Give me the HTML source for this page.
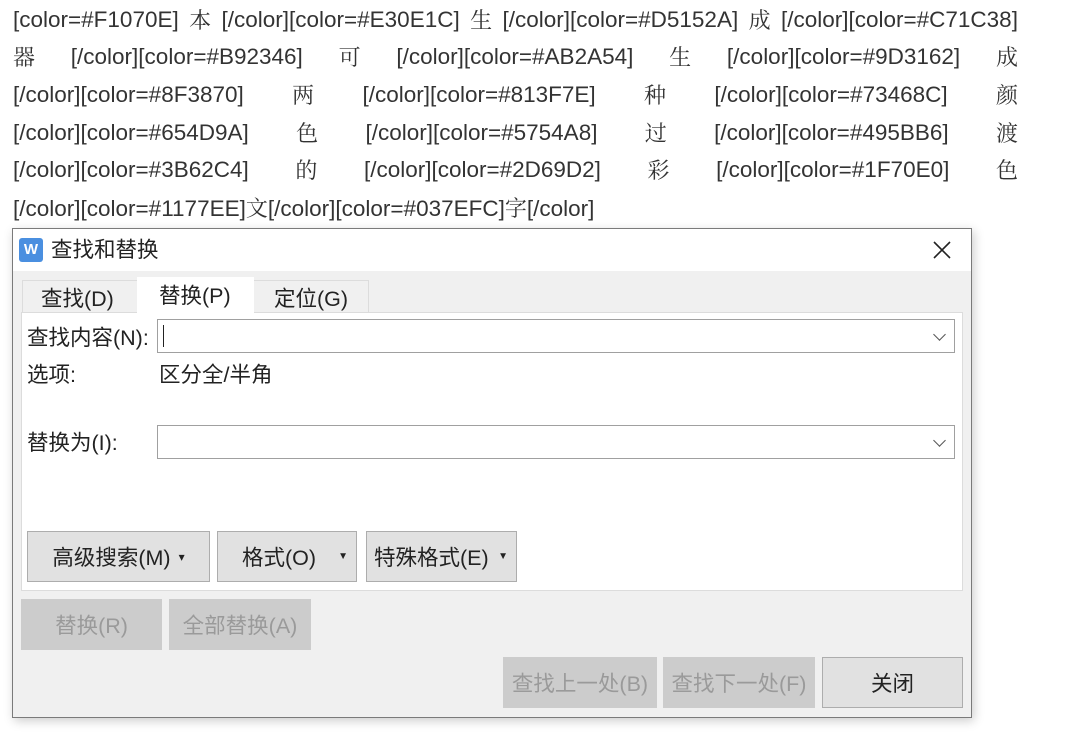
<!DOCTYPE html>
<html><head><meta charset="utf-8"><style>
body{margin:0;width:1080px;height:747px;background:#fff;position:relative;overflow:hidden;font-family:"Liberation Sans","Noto Sans CJK SC",sans-serif;color:#222}
.l{position:absolute;left:13px;width:1005px;font-size:22.5px;line-height:26px;display:flex;justify-content:space-between;white-space:pre;color:#333}
.l span.c{font-family:"Noto Serif CJK SC",serif;font-size:22px}
.a{position:absolute;box-sizing:border-box}
.t{font-size:21.5px;color:#222;position:absolute;line-height:26px}
.btn{position:absolute;box-sizing:border-box;background:#e1e1e1;border:1px solid #adadad;font-size:21.5px;display:flex;align-items:center;justify-content:center;color:#222}
.dis{background:#cccccc;border:1px solid #cccccc;color:#9a9a9a}
.inp{position:absolute;box-sizing:border-box;background:#fff;border:1px solid #a0a0a0}
.chev{position:absolute;right:10px;top:10px;width:8px;height:8px;border-right:1.3px solid #555;border-bottom:1.3px solid #555;transform:rotate(45deg)}
</style></head><body>
<div class="l" style="top:7px"><span>[color=#F1070E]</span><span class="c">本</span><span>[/color][color=#E30E1C]</span><span class="c">生</span><span>[/color][color=#D5152A]</span><span class="c">成</span><span>[/color][color=#C71C38]</span></div>
<div class="l" style="top:44px"><span class="c">器</span><span>[/color][color=#B92346]</span><span class="c">可</span><span>[/color][color=#AB2A54]</span><span class="c">生</span><span>[/color][color=#9D3162]</span><span class="c">成</span></div>
<div class="l" style="top:82px"><span>[/color][color=#8F3870]</span><span class="c">两</span><span>[/color][color=#813F7E]</span><span class="c">种</span><span>[/color][color=#73468C]</span><span class="c">颜</span></div>
<div class="l" style="top:120px"><span>[/color][color=#654D9A]</span><span class="c">色</span><span>[/color][color=#5754A8]</span><span class="c">过</span><span>[/color][color=#495BB6]</span><span class="c">渡</span></div>
<div class="l" style="top:157px"><span>[/color][color=#3B62C4]</span><span class="c">的</span><span>[/color][color=#2D69D2]</span><span class="c">彩</span><span>[/color][color=#1F70E0]</span><span class="c">色</span></div>
<div class="l" style="top:195px;justify-content:flex-start"><span>[/color][color=#1177EE]<span class="c">文</span>[/color][color=#037EFC]<span class="c">字</span>[/color]</span></div>

<div class="a" style="left:12px;top:228px;width:960px;height:490px;border:1px solid #7a7a7a;background:#f0f0f0;box-shadow:2px 3px 10px rgba(0,0,0,.2)">
 <div class="a" style="left:0;top:0;width:958px;height:42px;background:#fff"></div>
 <div class="a" style="left:6px;top:9px;width:24px;height:24px;background:#4a8fe0;border-radius:3px;color:#fff;font-size:15px;font-weight:bold;text-align:center;line-height:24px">W</div>
 <div class="t" style="left:38px;top:8px">查找和替换</div>
 <svg class="a" style="left:918px;top:10px" width="22" height="22" viewBox="0 0 22 22"><path d="M3 3L19 19M19 3L3 19" stroke="#222" stroke-width="1.6"/></svg>
 <div class="a" style="left:9px;top:51px;width:116px;height:33px;background:#f0f0f0;border:1px solid #dcdcdc;border-bottom:none"></div>
 <div class="t" style="left:28px;top:57px">查找(D)</div>
 <div class="a" style="left:240px;top:51px;width:116px;height:33px;background:#f0f0f0;border:1px solid #dcdcdc;border-bottom:none"></div>
 <div class="t" style="left:261px;top:57px">定位(G)</div>
 <div class="a" style="left:8px;top:83px;width:942px;height:279px;background:#fff;border:1px solid #dcdcdc"></div>
 <div class="a" style="left:124px;top:48px;width:117px;height:37px;background:#fff"></div>
 <div class="t" style="left:146px;top:54px">替换(P)</div>
 <div class="t" style="left:14px;top:96px">查找内容(N):</div>
 <div class="inp" style="left:144px;top:90px;width:798px;height:34px"><div class="a" style="left:5px;top:5px;width:1px;height:22px;background:#222"></div><div class="chev"></div></div>
 <div class="t" style="left:14px;top:133px">选项:</div>
 <div class="t" style="left:146px;top:133px">区分全/半角</div>
 <div class="t" style="left:14px;top:201px">替换为(I):</div>
 <div class="inp" style="left:144px;top:196px;width:798px;height:34px"><div class="chev"></div></div>
 <div class="btn" style="left:14px;top:302px;width:183px;height:51px">高级搜索(M)<span style="font-size:12px;margin-left:8px">▾</span></div>
 <div class="btn" style="left:204px;top:302px;width:140px;height:51px"><span style="margin-left:-16px">格式(O)</span><span style="position:absolute;right:8px;font-size:10px">▼</span></div>
 <div class="btn" style="left:353px;top:302px;width:151px;height:51px;justify-content:flex-start;padding-left:7px">特殊格式(E)<span style="position:absolute;right:8px;font-size:10px">▼</span></div>
 <div class="btn dis" style="left:8px;top:370px;width:141px;height:51px">替换(R)</div>
 <div class="btn dis" style="left:156px;top:370px;width:142px;height:51px">全部替换(A)</div>
 <div class="btn dis" style="left:490px;top:428px;width:154px;height:51px">查找上一处(B)</div>
 <div class="btn dis" style="left:650px;top:428px;width:152px;height:51px">查找下一处(F)</div>
 <div class="btn" style="left:809px;top:428px;width:141px;height:51px">关闭</div>
</div>
</body></html>
